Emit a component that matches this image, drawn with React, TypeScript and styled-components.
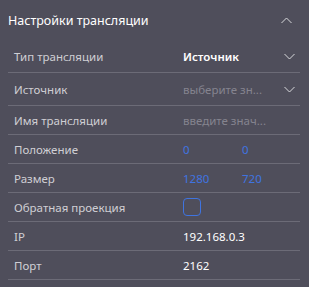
import React from "react";
import styled, { createGlobalStyle } from "styled-components";

const Global = createGlobalStyle`
  html, body { margin: 0; padding: 0; background: #4f4e5b; }
  body { font-family: "Noto Sans", "Open Sans", sans-serif; }
`;

const Panel = styled.div`
  width: 309px;
  height: 287px;
  box-sizing: border-box;
  background: #4f4e5b;
  padding: 0 9px 0 8px;
`;

const Header = styled.div`
  height: 40px;
  display: flex;
  align-items: center;
  justify-content: space-between;
  padding-right: 8px;
`;

const Title = styled.span`
  color: #ffffff;
  font-size: 12.5px;
`;

const Row = styled.div<{ $h: number }>`
  height: ${(p) => p.$h}px;
  box-sizing: border-box;
  border-bottom: 1px solid #6c6b77;
  display: grid;
  grid-template-columns: 175px 59px 1fr;
  align-items: center;
  font-size: 11.5px;
`;

const Label = styled.span`
  color: #cfced4;
  padding-left: 6px;
`;

const Value = styled.span<{ $tone?: "white" | "blue" | "muted"; $bold?: boolean }>`
  color: ${(p) =>
    p.$tone === "blue" ? "#3f74e0" : p.$tone === "muted" ? "#85848f" : "#ffffff"};
  font-weight: ${(p) => (p.$bold ? 600 : 400)};
  white-space: nowrap;
`;

const SelectCell = styled.div`
  grid-column: 2 / 4;
  display: flex;
  align-items: center;
  justify-content: space-between;
  padding-right: 5px;
`;

const Check = styled.span`
  width: 18px;
  height: 18px;
  box-sizing: border-box;
  border: 1.5px solid #3f74e0;
  border-radius: 4px;
  display: block;
`;

const Chevron = ({ up }: { up?: boolean }) => (
  <svg width="11" height="7" viewBox="0 0 11 7" fill="none">
    <path
      d={up ? "M0.5 6 L5.5 1 L10.5 6" : "M0.5 1 L5.5 6 L10.5 1"}
      stroke="#d8d8dc"
      strokeWidth="1"
    />
  </svg>
);

export default function App() {
  return (
    <>
      <Global />
      <Panel>
        <Header>
          <Title>Настройки трансляции</Title>
          <Chevron up />
        </Header>
        <Row $h={33}>
          <Label>Тип трансляции</Label>
          <SelectCell>
            <Value $bold>Источник</Value>
            <Chevron />
          </SelectCell>
        </Row>
        <Row $h={33}>
          <Label>Источник</Label>
          <SelectCell>
            <Value $tone="muted">выберите зн...</Value>
            <Chevron />
          </SelectCell>
        </Row>
        <Row $h={29}>
          <Label>Имя трансляции</Label>
          <Value $tone="muted">введите знач...</Value>
        </Row>
        <Row $h={29}>
          <Label>Положение</Label>
          <Value $tone="blue">0</Value>
          <Value $tone="blue">0</Value>
        </Row>
        <Row $h={29}>
          <Label>Размер</Label>
          <Value $tone="blue">1280</Value>
          <Value $tone="blue">720</Value>
        </Row>
        <Row $h={29}>
          <Label>Обратная проекция</Label>
          <Check />
        </Row>
        <Row $h={29}>
          <Label>IP</Label>
          <Value>192.168.0.3</Value>
        </Row>
        <Row $h={29}>
          <Label>Порт</Label>
          <Value>2162</Value>
        </Row>
      </Panel>
    </>
  );
}
